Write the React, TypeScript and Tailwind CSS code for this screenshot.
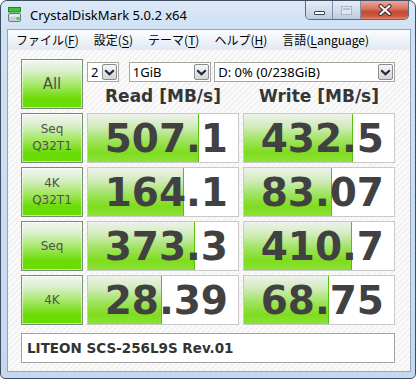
import React from 'react';

type Row = { label: string[]; read: string; write: string };

const rows: Row[] = [
  { label: ['Seq', 'Q32T1'], read: '507.1', write: '432.5' },
  { label: ['4K', 'Q32T1'], read: '164.1', write: '83.07' },
  { label: ['Seq'], read: '373.3', write: '410.7' },
  { label: ['4K'], read: '28.39', write: '68.75' },
];

// CrystalDiskMark style log scale bar
const barWidth = (v: string) => {
  const n = parseFloat(v);
  if (!n || n <= 0) return 0;
  return Math.max(0, Math.min(1, (Math.log10(n) + 1) / 5)) * 100;
};

const Chevron = () => (
  <svg width="11" height="7" viewBox="0 0 11 7">
    <path d="M1.2 1.2 L5.5 5.3 L9.8 1.2" fill="none" stroke="#1b2a3d" strokeWidth="2.2" />
  </svg>
);

const Select = ({ value, className }: { value: string; className: string }) => (
  <div className={`flex h-[20px] items-center border border-[#a6a6a6] bg-white pl-[3px] pr-px ${className}`}>
    <span className="flex-1 font-['Noto_Sans',sans-serif] text-[13px] leading-none text-black">{value}</span>
    <div className="flex h-[16px] w-[15px] items-center justify-center rounded-[2px] border border-[#8c8c8c] bg-[linear-gradient(180deg,#f6f6f6_0%,#e6e6e6_50%,#d4d4d4_100%)]">
      <Chevron />
    </div>
  </div>
);

const GreenButton = ({ children, className }: { children: React.ReactNode; className: string }) => (
  <div
    className={`flex flex-col items-center justify-center border border-[#7b8c76] bg-[linear-gradient(180deg,#f3f6f1_0%,#dcefcf_22%,#a6e866_52%,#6cdc08_80%,#66dd00_100%)] font-['DejaVu_Sans',sans-serif] text-[#505050] shadow-[inset_0_0_0_1px_rgba(255,255,255,0.55)] ${className}`}
  >
    {children}
  </div>
);

const ScoreCell = ({ value }: { value: string }) => (
  <div className="relative h-[50px] w-[152px] overflow-hidden border border-[#c9c9c9] bg-white">
    <div
      className="absolute inset-y-0 left-0 border-r border-[#58c010] bg-[linear-gradient(180deg,#eef1ec_0%,#d2ecbd_25%,#9fe35e_55%,#7fdc1e_80%,#8be236_100%)]"
      style={{ width: `${barWidth(value)}%` }}
    />
    <div className="relative flex h-full items-center justify-end pr-[10px] font-['DejaVu_Sans',sans-serif] text-[39px] font-bold leading-none text-[#414141]">
      {value}
    </div>
  </div>
);

const MenuItem = ({ pre, key1, post }: { pre: string; key1: string; post: string }) => (
  <span className="whitespace-nowrap">
    {pre}(<span className="underline underline-offset-2">{key1}</span>{post})
  </span>
);

export default function App() {
  return (
    <div className="relative h-[379px] w-[416px] overflow-hidden bg-white">
      <div className="flex h-full w-full flex-col rounded-t-[7px] rounded-b-[5px] border border-[#3f4d60] bg-[linear-gradient(180deg,#dbe8f7_0%,#cfe1f4_8%,#c4d9f0_100%)] pb-[6px] pl-[6px] pr-[4px]">
        {/* Title bar */}
        <div className="flex h-[28px] shrink-0 items-center">
          <svg width="14" height="16" viewBox="0 0 14 16" className="ml-[1px] mr-[8px]">
            <rect x="0.5" y="0.5" width="12" height="4.5" fill="#3cc23c" stroke="#1e8a1e" />
            <rect x="0.5" y="6.5" width="12" height="8" rx="1.5" fill="#c9ced4" stroke="#6f7780" />
            <rect x="1.5" y="7.5" width="10" height="2" fill="#eef1f4" />
            <rect x="8.5" y="10.5" width="3" height="2" fill="#2fbf2f" />
          </svg>
          <span className="font-['Noto_Sans',sans-serif] text-[13px] leading-none text-black">CrystalDiskMark 5.0.2 x64</span>
        </div>

        {/* Client with border */}
        <div className="flex flex-1 flex-col border border-[#93a6bf]">
          {/* Menu bar */}
          <div className="flex h-[20px] shrink-0 items-center gap-[15px] bg-[linear-gradient(180deg,#fbfcfe_0%,#eef3f9_50%,#e0e8f2_100%)] pl-[8px] font-['Noto_Sans_CJK_JP',sans-serif] text-[12px] leading-none text-black">
            <MenuItem pre="ファイル" key1="F" post="" />
            <MenuItem pre="設定" key1="S" post="" />
            <MenuItem pre="テーマ" key1="T" post="" />
            <MenuItem pre="ヘルプ" key1="H" post="" />
            <span className="whitespace-nowrap">
              言語(<span className="underline underline-offset-2">L</span>anguage)
            </span>
          </div>

          {/* Main area */}
          <div className="flex-1 bg-[repeating-linear-gradient(135deg,#f2f2f2_0px,#f2f2f2_2px,#fbfbfb_2px,#fbfbfb_4px)] pl-[13px] pt-[9px]">
            <div className="flex gap-[4px]">
              <GreenButton className="h-[50px] w-[62px] text-[15px]">All</GreenButton>
              <div className="flex w-[308px] flex-col">
                <div className="mt-[3px] flex items-center">
                  <Select value="2" className="w-[32px]" />
                  <Select value="1GiB" className="ml-[10px] w-[83px]" />
                  <Select value="D: 0% (0/238GiB)" className="ml-[3px] w-[182px]" />
                </div>
                <div className="flex flex-1 items-center gap-[4px] pt-[2px] font-['DejaVu_Sans',sans-serif] text-[17px] font-bold leading-none text-[#363636]">
                  <span className="w-[152px] text-center">Read [MB/s]</span>
                  <span className="w-[152px] text-center">Write [MB/s]</span>
                </div>
              </div>
            </div>

            {rows.map((r, i) => (
              <div key={i} className="mt-[4px] flex gap-[4px]">
                <GreenButton className="h-[50px] w-[62px] text-[12px] leading-[17px]">
                  {r.label.map((l) => (
                    <span key={l}>{l}</span>
                  ))}
                </GreenButton>
                <ScoreCell value={r.read} />
                <ScoreCell value={r.write} />
              </div>
            ))}

            <div className="mt-[8px] flex h-[30px] w-[374px] items-center border border-[#a3a3a3] bg-white pl-[5px] font-['DejaVu_Sans',sans-serif] text-[13.5px] font-bold text-[#333]">
              LITEON SCS-256L9S Rev.01
            </div>
          </div>
        </div>
      </div>

      {/* Caption buttons */}
      <div className="absolute right-[7px] top-[1px] flex h-[19px] overflow-hidden rounded-b-[5px] border border-t-0 border-[#5a6a80]">
        <div className="flex w-[27px] items-end justify-center border-r border-[#7d8ea6] bg-[linear-gradient(180deg,#e4ecf6_0%,#d3deec_50%,#bccbe0_100%)] pb-[4px]">
          <div className="h-[4px] w-[11px] rounded-[1px] border border-[#39424e] bg-white" />
        </div>
        <div className="flex w-[28px] items-center justify-center border-r border-[#7d8ea6] bg-[linear-gradient(180deg,#e4ecf6_0%,#d3deec_50%,#bccbe0_100%)]">
          <div className="h-[9px] w-[11px] border border-[#a9b6c6] bg-[#dfe6ef] p-[1px]">
            <div className="h-full w-full border-t-2 border-[#b6c2d2]" />
          </div>
        </div>
        <div className="flex w-[47px] items-center justify-center bg-[linear-gradient(180deg,#e8aa9c_0%,#d8705c_45%,#c44a33_60%,#cf5a40_85%,#e2876c_100%)]">
          <svg width="14" height="12" viewBox="0 0 14 12">
            <path d="M2.5 2 L11.5 10 M11.5 2 L2.5 10" stroke="#3a2a28" strokeWidth="4" strokeLinecap="round" />
            <path d="M2.5 2 L11.5 10 M11.5 2 L2.5 10" stroke="#ffffff" strokeWidth="2" strokeLinecap="round" />
          </svg>
        </div>
      </div>
    </div>
  );
}
